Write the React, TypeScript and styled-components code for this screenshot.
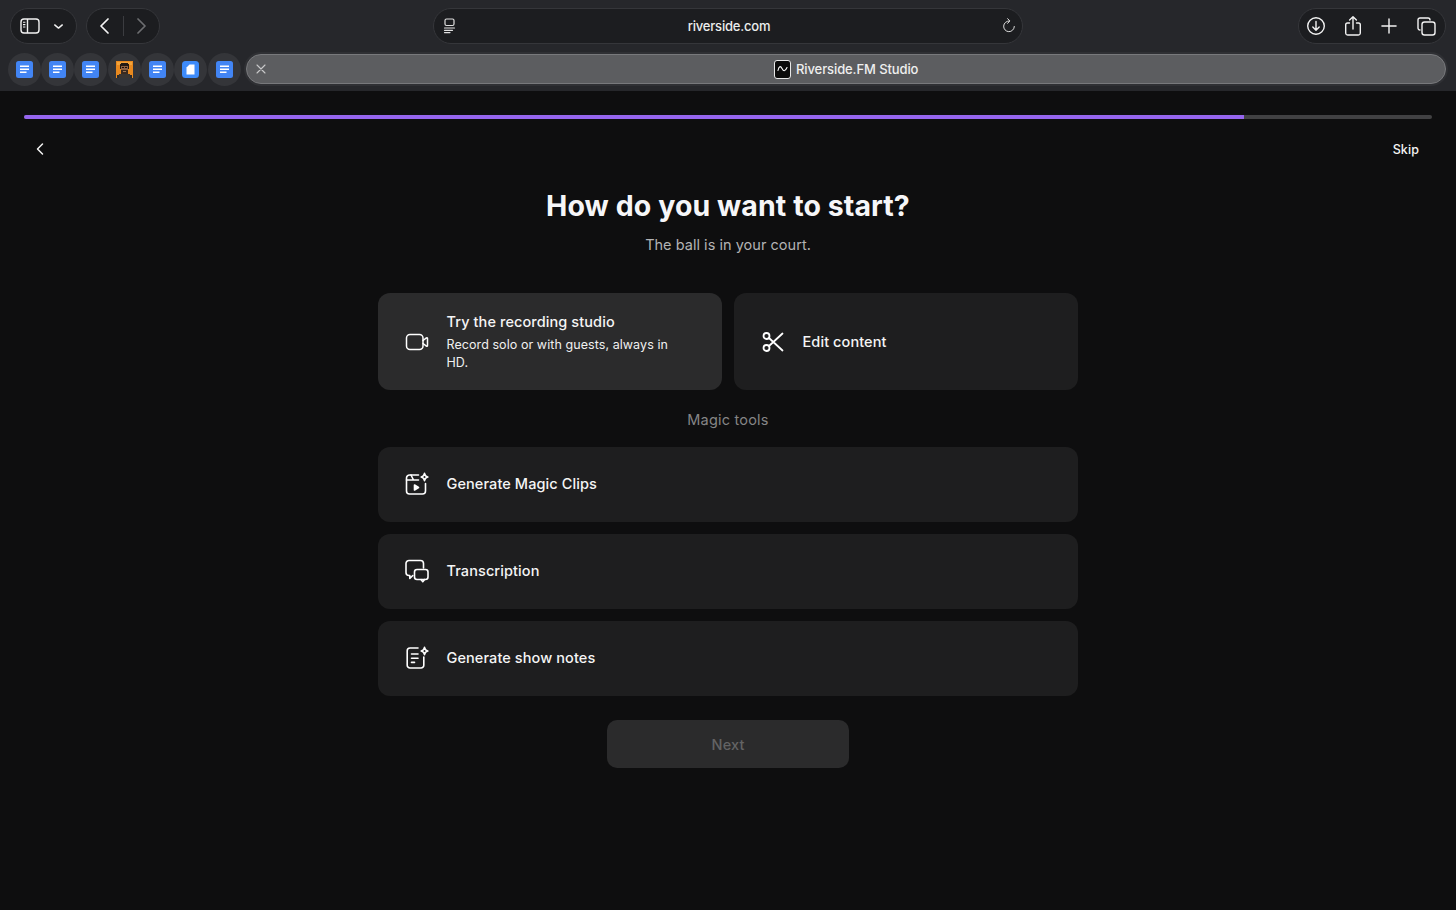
import React from 'react';
import styled, { createGlobalStyle } from 'styled-components';

const GlobalStyle = createGlobalStyle`
  html, body {
    margin: 0;
    padding: 0;
    height: 100%;
    background: #0e0e0f;
    overflow: hidden;
  }
  * { box-sizing: border-box; }
`;

const Page = styled.div`
  width: 1456px;
  height: 910px;
  display: flex;
  flex-direction: column;
  font-family: Inter, "Liberation Sans", sans-serif;
  color: #fff;
`;

const Chrome = styled.header`
  height: 91px;
  flex: none;
  background: #26272b;
  padding: 8px 10px 0 7.5px;
  display: flex;
  flex-direction: column;
  gap: 9px;
`;

const ToolRow = styled.div`
  height: 36px;
  width: 1438.5px;
  padding-left: 2.5px;
  display: grid;
  grid-template-columns: 1fr 590px 1fr;
`;

const LeftTools = styled.div`
  display: flex;
  gap: 9px;
`;

const Pill = styled.div<{ $width: number }>`
  width: ${(p) => p.$width}px;
  height: 36px;
  border-radius: 18px;
  background: #1c1d20;
  border: 1px solid #35363a;
  display: flex;
  align-items: center;
`;

const SidebarPill = styled(Pill)`
  padding: 0 11px 0 9px;
  justify-content: space-between;
`;

const NavPill = styled(Pill)`
  padding: 0 12px;
  justify-content: space-between;
`;

const NavDivider = styled.span`
  width: 1px;
  height: 20px;
  background: #3b3c40;
`;

const AddressBar = styled(Pill)`
  padding: 0 5px 0 8px;
  justify-content: space-between;
`;

const AddressText = styled.span`
  font-size: 13px;
  font-weight: 500;
  color: #eceded;
  letter-spacing: -0.2px;
  margin-right: 1px;
`;

const RightTools = styled.div`
  display: flex;
  justify-content: flex-end;
`;

const ActionPill = styled(Pill)`
  padding: 0 9px 0 7px;
  justify-content: space-between;
`;

const TabRow = styled.div`
  display: flex;
  align-items: center;
  height: 32px;
`;

const Favicons = styled.div`
  display: flex;
  gap: 0.4px;
  margin-right: 5.5px;
`;

const FaviconSlot = styled.div`
  width: 33px;
  height: 33px;
  border-radius: 50%;
  background: #343539;
  display: flex;
  align-items: center;
  justify-content: center;
`;

const ActiveTab = styled.div`
  width: 1200px;
  height: 30px;
  border-radius: 15px;
  background: #5c5d60;
  border: 1px solid #78797c;
  box-shadow: 0 0 0 2px #2f3034;
  display: flex;
  align-items: center;
  justify-content: center;
  position: relative;
`;

const TabClose = styled.span`
  position: absolute;
  left: 8px;
  top: 8px;
  display: flex;
`;

const TabTitle = styled.span`
  font-size: 13px;
  font-weight: 500;
  color: #efefef;
  margin-left: 5px;
  letter-spacing: -0.1px;
`;

const TabLogo = styled.span`
  width: 17px;
  height: 19px;
  border-radius: 3px;
  background: #0b0b0b;
  border: 1px solid #e8e8e8;
  display: flex;
  align-items: center;
  justify-content: center;
`;

const Main = styled.main`
  flex: 1;
  background: #0e0e0f;
  padding: 24px 24px 0;
  display: flex;
  flex-direction: column;
  align-items: center;
`;

const Track = styled.div`
  width: 100%;
  height: 4px;
  flex: none;
  border-radius: 2px;
  background: #414143;
  overflow: hidden;
`;

const TrackFill = styled.div`
  height: 100%;
  background: #9565ee;
`;

const TopActions = styled.div`
  width: 100%;
  height: 20px;
  margin-top: 20px;
  padding: 0 13px 0 9px;
  display: flex;
  align-items: center;
  justify-content: space-between;
`;

const SkipLink = styled.span`
  font-size: 12.5px;
  font-weight: 500;
  letter-spacing: 0.1px;
  color: #f4f4f4;
`;

const Title = styled.h1`
  margin: 30px 0 0;
  font-size: 28.5px;
  line-height: 34px;
  font-weight: 700;
  letter-spacing: 0.08px;
  color: #f6f6f8;
`;

const Subtitle = styled.p`
  margin: 12px 0 0;
  font-size: 14.5px;
  line-height: 20px;
  letter-spacing: 0.03px;
  color: #b3b3b4;
`;

const Options = styled.section`
  width: 700px;
  margin-top: 38px;
  display: flex;
  flex-direction: column;
`;

const CardGrid = styled.div`
  display: grid;
  grid-template-columns: 1fr 1fr;
  gap: 12px;
`;

const OptionCard = styled.div<{ $selected?: boolean; $height: number }>`
  height: ${(p) => p.$height}px;
  border-radius: 12px;
  background: ${(p) => (p.$selected ? '#2b2b2c' : '#1e1e1f')};
  padding: 0 28px 0 27px;
  display: flex;
  align-items: center;
  gap: 17.5px;
`;

const IconBox = styled.span`
  width: 24px;
  height: 24px;
  flex: none;
  display: flex;
  align-items: center;
  justify-content: center;
`;

const OptionText = styled.div`
  display: flex;
  flex-direction: column;
  max-width: 240px;
`;

const OptionTitle = styled.span`
  font-size: 14.5px;
  line-height: 20px;
  font-weight: 500;
  letter-spacing: 0.09px;
  color: #f5f5f5;
`;

const OptionDesc = styled.span`
  margin-top: 4px;
  font-size: 12.5px;
  line-height: 18px;
  font-weight: 400;
  letter-spacing: 0.07px;
  color: #f0f0f0;
`;

const SectionLabel = styled.div`
  margin: 20px 0 17px;
  text-align: center;
  font-size: 14.5px;
  line-height: 20px;
  letter-spacing: 0.2px;
  color: #858586;
`;

const RowList = styled.div`
  display: flex;
  flex-direction: column;
  gap: 12.5px;
`;

const NextButton = styled.button`
  width: 242.5px;
  height: 48px;
  margin-top: 24.5px;
  padding-bottom: 1px;
  flex: none;
  border: none;
  border-radius: 10px;
  background: #2b2b2c;
  color: #636364;
  font-family: inherit;
  font-size: 14.5px;
  font-weight: 500;
  letter-spacing: 0.1px;
`;

const Stroke = ({ size, children, width = 1.6, color = '#fff' }: { size: number; children: React.ReactNode; width?: number; color?: string }) => (
  <svg width={size} height={size} viewBox="0 0 24 24" fill="none" stroke={color} strokeWidth={width} strokeLinecap="round" strokeLinejoin="round">
    {children}
  </svg>
);

const Sparkle = ({ x, y }: { x: number; y: number }) => (
  <path
    transform={`translate(${x} ${y})`}
    d="M0-3.6c.3 2 1.3 3.1 3.3 3.6-2 .5-3 1.6-3.3 3.6-.3-2-1.3-3.1-3.3-3.6 2-.5 3-1.6 3.3-3.6z"
  />
);

const DocIcon = () => (
  <svg width="17" height="17" viewBox="0 0 17 17">
    <rect width="17" height="17" rx="2.5" fill="#4285f4" />
    <path d="M4 4.4h9v1.5H4zM4 7.4h9v1.5H4zM4 10.4h6.5v1.5H4z" fill="#fff" />
  </svg>
);

const BlankDocIcon = () => (
  <svg width="17" height="17" viewBox="0 0 17 17">
    <rect width="17" height="17" rx="3.5" fill="#3d8bfa" />
    <path d="M4.5 6.5 7.5 3.5H12.5V13.5H4.5z" fill="#fff" />
  </svg>
);

const AvatarIcon = () => (
  <svg width="17" height="17" viewBox="0 0 17 17" shapeRendering="crispEdges">
    <rect width="17" height="17" fill="#e8891f" />
    <rect x="1" y="1" width="15" height="3" fill="#f2a33a" />
    <rect x="1" y="14" width="15" height="3" fill="#2e2a28" />
    <rect x="3" y="13" width="11" height="4" fill="#3a3532" />
    <rect x="5" y="3" width="7" height="10" fill="#8f6243" />
    <rect x="5" y="2" width="7" height="3" fill="#241a14" />
    <rect x="4" y="3" width="1" height="5" fill="#241a14" />
    <rect x="12" y="3" width="1" height="5" fill="#241a14" />
    <rect x="6" y="6" width="2" height="1" fill="#17100c" />
    <rect x="9" y="6" width="2" height="1" fill="#17100c" />
    <rect x="5" y="9" width="7" height="4" fill="#3a2a20" />
    <rect x="7" y="10" width="3" height="1" fill="#a57650" />
  </svg>
);

const favicons = ['doc', 'doc', 'doc', 'avatar', 'doc', 'blank', 'doc'];

export default function App() {
  return (
    <Page>
      <GlobalStyle />
      <Chrome>
        <ToolRow>
          <LeftTools>
            <SidebarPill $width={67}>
              <svg width="20" height="16" viewBox="0 0 20 16" fill="none" stroke="#f2f2f2" strokeWidth="1.4">
                <rect x="1" y="1" width="18" height="14" rx="3" />
                <path d="M7.5 1v14" />
                <path d="M3 4.2h2.4M3 6.6h2.4M3 9h2.4" strokeWidth="1.1" />
              </svg>
              <Stroke size={13} width={2.6} color="#f2f2f2"><path d="m5 9 7 6 7-6" /></Stroke>
            </SidebarPill>
            <NavPill $width={74}>
              <svg width="11" height="16" viewBox="0 0 11 16" fill="none" stroke="#f4f4f4" strokeWidth="1.7" strokeLinecap="round" strokeLinejoin="round">
                <path d="M9 1 2 8l7 7" />
              </svg>
              <NavDivider />
              <svg width="11" height="16" viewBox="0 0 11 16" fill="none" stroke="#6d6e71" strokeWidth="1.7" strokeLinecap="round" strokeLinejoin="round">
                <path d="m2 1 7 7-7 7" />
              </svg>
            </NavPill>
          </LeftTools>
          <AddressBar $width={590}>
            <svg width="16" height="16" viewBox="0 0 16 16" fill="none" stroke="#e0e0e0" strokeWidth="1.2" strokeLinecap="round">
              <rect x="3" y="1" width="9" height="6.5" rx="1.5" />
              <path d="M2.5 10h10M2.5 12.3h8M2.5 14.6h5.5" />
            </svg>
            <AddressText>riverside.com</AddressText>
            <Stroke size={16} width={1.5} color="#dcdcdc">
              <path d="M12.5 4.5a8 8 0 1 0 7.5 8.2" />
              <path d="m10 1 3.2 3.4L10 8" />
            </Stroke>
          </AddressBar>
          <RightTools>
            <ActionPill $width={148}>
              <svg width="20" height="20" viewBox="0 0 20 20" fill="none" stroke="#f2f2f2" strokeWidth="1.4" strokeLinecap="round" strokeLinejoin="round">
                <circle cx="10" cy="10" r="8.3" />
                <path d="M10 5.5v8.5M6.8 11l3.2 3.2 3.2-3.2" />
              </svg>
              <svg width="18" height="22" viewBox="0 0 18 22" fill="none" stroke="#f2f2f2" strokeWidth="1.4" strokeLinecap="round" strokeLinejoin="round">
                <path d="M5.5 8H3.5A1.8 1.8 0 0 0 1.7 9.8v8.4A2 2 0 0 0 3.7 20h10.6a2 2 0 0 0 2-1.8V9.8A1.8 1.8 0 0 0 14.5 8h-2" />
                <path d="M9 14V2M5.6 5 9 1.7 12.4 5" />
              </svg>
              <Stroke size={20} width={1.7} color="#f2f2f2"><path d="M12 3.5v17M3.5 12h17" /></Stroke>
              <svg width="19" height="19" viewBox="0 0 19 19" fill="none" stroke="#f2f2f2" strokeWidth="1.4">
                <path d="M3.5 13H3a2 2 0 0 1-2-2V3a2 2 0 0 1 2-2h8a2 2 0 0 1 2 2v.5" />
                <rect x="5" y="5" width="13" height="13" rx="2.5" />
              </svg>
            </ActionPill>
          </RightTools>
        </ToolRow>
        <TabRow>
          <Favicons>
            {favicons.map((kind, i) => (
              <FaviconSlot key={i}>
                {kind === 'doc' && <DocIcon />}
                {kind === 'avatar' && <AvatarIcon />}
                {kind === 'blank' && <BlankDocIcon />}
              </FaviconSlot>
            ))}
          </Favicons>
          <ActiveTab>
            <TabClose>
              <svg width="12" height="12" viewBox="0 0 12 12" stroke="#c9c9ca" strokeWidth="1.1" strokeLinecap="round">
                <path d="m2 2 8 8M10 2l-8 8" />
              </svg>
            </TabClose>
            <TabLogo>
              <svg width="11" height="8" viewBox="0 0 11 8" fill="none" stroke="#fff" strokeWidth="1.1" strokeLinecap="round">
                <path d="M1 5.5C2 1 3.5 .5 5 3.5s3 3.5 5 -1" />
              </svg>
            </TabLogo>
            <TabTitle>Riverside.FM Studio</TabTitle>
          </ActiveTab>
        </TabRow>
      </Chrome>

      <Main>
        <Track>
          <TrackFill style={{ width: `${(1220 / 1408) * 100}%` }} />
        </Track>
        <TopActions>
          <svg width="14" height="14" viewBox="0 0 14 14" fill="none" stroke="#f2f2f2" strokeWidth="1.5" strokeLinecap="round" strokeLinejoin="round">
            <path d="M9.5 2 4.5 7l5 5" />
          </svg>
          <SkipLink>Skip</SkipLink>
        </TopActions>
        <Title>How do you want to start?</Title>
        <Subtitle>The ball is in your court.</Subtitle>

        <Options>
          <CardGrid>
            <OptionCard $selected $height={97}>
              <IconBox>
                <Stroke size={24} width={1.5}>
                  <rect x="1.5" y="4.5" width="16.5" height="15" rx="3.5" />
                  <path d="m18 10.5 3.4-2.6q1.1-.6 1.1.8v6.6q0 1.4-1.1.8L18 13.5" />
                </Stroke>
              </IconBox>
              <OptionText>
                <OptionTitle>Try the recording studio</OptionTitle>
                <OptionDesc>Record solo or with guests, always in HD.</OptionDesc>
              </OptionText>
            </OptionCard>
            <OptionCard $height={97}>
              <IconBox>
                <Stroke size={24} width={1.8}>
                  <circle cx="5.5" cy="6" r="3" />
                  <circle cx="5.5" cy="18" r="3" />
                  <path d="M8 8 21.5 20.5M8 16 21.5 3.5" />
                </Stroke>
              </IconBox>
              <OptionTitle>Edit content</OptionTitle>
            </OptionCard>
          </CardGrid>

          <SectionLabel>Magic tools</SectionLabel>

          <RowList>
            <OptionCard $height={74.5}>
              <IconBox>
                <Stroke size={24} width={1.6}>
                  <path d="M13.5 3H4.5a3 3 0 0 0-3 3v13a3 3 0 0 0 3 3h13a3 3 0 0 0 3-3v-7.5" />
                  <path d="M1.5 8h12M6 3l2.5 5" />
                  <path d="m9.5 13 4 2.5-4 2.5z" fill="#fff" />
                  <Sparkle x={19.5} y={5} />
                </Stroke>
              </IconBox>
              <OptionTitle>Generate Magic Clips</OptionTitle>
            </OptionCard>
            <OptionCard $height={74.5}>
              <IconBox>
                <Stroke size={24} width={1.6}>
                  <path d="M18.5 9V4.5a3 3 0 0 0-3-3H4a3 3 0 0 0-3 3v9a3 3 0 0 0 3 3h.8v3l3-3" />
                  <rect x="9.5" y="10.5" width="13.5" height="10" rx="2.5" />
                  <path d="m16 20.5 1.8 2.2 1.7-2.2" />
                </Stroke>
              </IconBox>
              <OptionTitle>Transcription</OptionTitle>
            </OptionCard>
            <OptionCard $height={74.5}>
              <IconBox>
                <Stroke size={24} width={1.6}>
                  <path d="M13 2H5a2.8 2.8 0 0 0-2.8 2.8v14.4A2.8 2.8 0 0 0 5 22h11a2.8 2.8 0 0 0 2.8-2.8V11" />
                  <path d="M6.5 8h6.5M6.5 12.2h6.5M6.5 16.4h3" />
                  <Sparkle x={19.5} y={5} />
                </Stroke>
              </IconBox>
              <OptionTitle>Generate show notes</OptionTitle>
            </OptionCard>
          </RowList>
        </Options>

        <NextButton disabled>Next</NextButton>
      </Main>
    </Page>
  );
}
